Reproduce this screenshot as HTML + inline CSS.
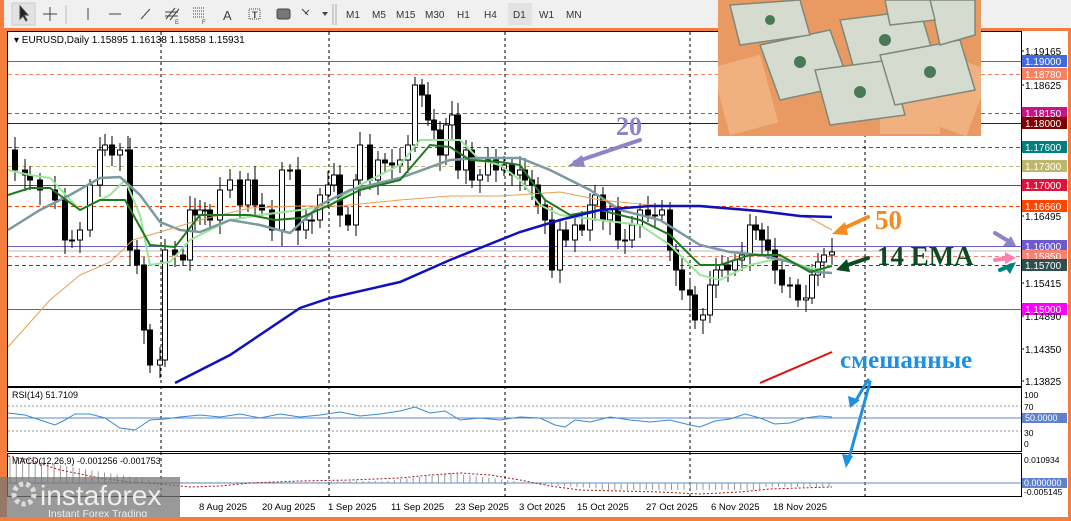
<!DOCTYPE html>
<html><head><meta charset="utf-8"><style>
body{margin:0;width:1071px;height:521px;overflow:hidden;background:#f47c3c;font-family:"Liberation Sans",sans-serif}
svg{position:absolute;left:0;top:0}
</style></head><body>
<svg id="s" width="1071" height="521" xmlns="http://www.w3.org/2000/svg" font-family="Liberation Sans, sans-serif">
<defs><clipPath id="ci"><rect x="718" y="0" width="263" height="136"/></clipPath></defs>
<rect x="4" y="0" width="1067" height="28" fill="#f0f0f0"/>
<rect x="12" y="3" width="23" height="22" fill="#e2e2e2" stroke="#ccc"/>
<rect x="508" y="3" width="24" height="22" fill="#e2e2e2"/>
<g stroke="#444" fill="none" stroke-width="1">
<path d="M20 6 L20 19 L23 16 L26 21 L27 20 L24 15 L28 15 Z" fill="#222"/>
<path d="M50 7v14M43 14h14"/><line x1="66" y1="5" x2="66" y2="24" stroke="#bbb"/>
<path d="M88 8v12M109 14h12M141 19l9-10"/>
<path d="M166 19l9-11M170 20l9-11M165 12h13M165 16h13"/>
<path d="M193 8h12M193 11h12M193 14h12M193 17h12" stroke-dasharray="1 1"/>
<path d="M249 9h11v10h-11z" stroke-dasharray="1 1"/>
<rect x="277" y="9" width="13" height="10" rx="2" fill="#777"/>
<path d="M302 9l6 6M309 10l-4 4" />
<line x1="333" y1="4" x2="333" y2="25" stroke="#aaa"/><line x1="336" y1="4" x2="336" y2="25" stroke="#aaa"/>
</g>
<path d="M322 12h6l-3 4z" fill="#444"/>
<text x="175" y="24" font-size="6" fill="#444">E</text><text x="202" y="24" font-size="6" fill="#444">F</text>
<text x="223" y="20" font-size="13" fill="#444">A</text>
<text x="252" y="18" font-size="9" fill="#444" font-weight="bold">T</text>
<g font-size="10" fill="#333"><text x="346" y="18">M1</text><text x="372" y="18">M5</text><text x="396" y="18">M15</text><text x="425" y="18">M30</text><text x="457" y="18">H1</text><text x="484" y="18">H4</text><text x="513" y="18">D1</text><text x="539" y="18">W1</text><text x="566" y="18">MN</text></g>
<rect x="7" y="31" width="1061" height="486" fill="#fff"/>
<g stroke="#000" fill="none"><rect x="7.5" y="31.5" width="1014" height="355"/><rect x="7.5" y="387.5" width="1014" height="64"/><rect x="7.5" y="453.5" width="1014" height="43"/></g>
<g id="hl"></g>
<g stroke="#000" stroke-dasharray="3 3"><path d="M161 32V497M329 32V497M505 32V497M690 32V497M865 32V497"/></g>
<g clip-path="url(#ci)">
<rect x="718" y="0" width="263" height="136" fill="#e99a62"/>
<g fill="#f0b080"><rect x="720" y="60" width="50" height="70" transform="rotate(-15 745 95)"/><rect x="930" y="60" width="50" height="70" transform="rotate(20 955 95)"/><rect x="880" y="100" width="60" height="34"/></g>
<g fill="#d6dbd0" stroke="#7d8a7a" stroke-width="1.5">
<polygon points="760,45 830,30 850,85 780,100"/><polygon points="840,20 920,10 935,60 855,72"/><polygon points="815,70 890,60 905,115 830,125"/><polygon points="880,55 960,40 975,90 895,105"/><polygon points="730,5 800,0 810,35 740,45"/><polygon points="930,0 975,0 975,35 940,45"/><polygon points="885,0 930,0 935,20 890,25"/></g>
<g fill="#4a7a55"><circle cx="800" cy="62" r="6"/><circle cx="885" cy="40" r="6"/><circle cx="860" cy="92" r="6"/><circle cx="930" cy="72" r="6"/><circle cx="770" cy="20" r="5"/></g>
</g>
<g id="c"></g>
<g fill="none">
<polyline stroke="#98e898" stroke-width="2" points="8,170 30,175 50,178 80,210 110,195 125,180 140,215 150,265 170,262 190,240 230,220 260,215 300,210 330,205 360,185 400,165 420,140 440,140 460,140 480,160 500,165 520,180 540,205 560,215 600,220 640,225 670,245 700,275 720,280 750,265 780,258 800,265 820,270 832,265"/>
<polyline stroke="#7a9aa0" stroke-width="2.5" points="8,230 40,210 70,195 100,178 120,177 140,195 160,222 180,230 200,232 230,220 260,225 290,233 320,205 350,190 400,178 450,160 480,158 520,158 550,170 590,190 620,210 660,220 700,245 730,252 760,255 790,262 815,272 832,273"/>
<polyline stroke="#e8a050" stroke-width="1" points="8,347 50,300 80,275 110,262 133,240 160,232 200,220 250,208 300,206 340,206 400,200 450,196 500,196 560,192 600,200 650,205 700,207 760,212 810,218 832,230"/>
<polyline stroke="#1e7a1e" stroke-width="2" points="8,195 30,188 50,188 80,210 100,200 125,200 150,245 175,247 200,215 250,215 275,220 300,218 330,205 360,190 400,180 430,145 450,147 470,160 500,162 520,165 545,200 570,215 600,210 640,220 670,235 700,265 720,265 750,255 780,255 810,272 832,266"/>
<polyline stroke="#1010c0" stroke-width="2.5" points="175,383 230,355 300,308 330,298 400,282 450,260 500,240 520,232 560,220 600,210 650,206 700,206 760,211 800,216 832,217"/>
<polyline stroke="#e01010" stroke-width="2" points="760,383 832,352"/>
</g>
<g font-family="Liberation Serif, serif" font-weight="bold">
<text x="616" y="135" font-size="26" fill="#8b85c8">20</text>
<text x="875" y="229" font-size="27" fill="#f58a1f">50</text>
<text x="877" y="265" font-size="27" fill="#0d4a22">14 EMA</text>
<text x="840" y="368" font-size="25" fill="#1e90e0">смешанные</text>
</g>
<g stroke-width="4" fill="none" stroke-linecap="round">
<path d="M640 140L575 162" stroke="#8b85c8"/><path d="M868 217L838 231" stroke="#f58a1f"/><path d="M868 258L842 267" stroke="#0d4a22"/>
<path d="M995 233L1010 242" stroke="#8b85c8"/><path d="M995 260L1010 258" stroke="#ff80b0"/><path d="M1000 270L1012 265" stroke="#008080"/>
<path d="M868 380L855 402M870 382L848 462" stroke="#1e90e0" stroke-width="3"/>
</g>
<g>
<polygon points="568,166 582,155 585,167" fill="#8b85c8"/><polygon points="832,234 845,222 848,235" fill="#f58a1f"/><polygon points="836,270 847,259 850,272" fill="#0d4a22"/>
<polygon points="1016,246 1003,246 1011,236" fill="#8b85c8"/><polygon points="1016,258 1005,252 1005,264" fill="#ff80b0"/><polygon points="1016,262 1004,266 1010,274" fill="#008080"/>
<polygon points="850,408 848,396 860,400" fill="#1e90e0"/><polygon points="846,468 842,454 853,456" fill="#1e90e0"/>
</g>
<text x="14" y="43" font-size="10" fill="#000">▾ EURUSD,Daily  1.15895 1.16138 1.15858 1.15931</text>
<g id="ax" font-size="9.5" fill="#000"></g>
<g stroke="#999" stroke-dasharray="2 2"><path d="M8 406H1021M8 431H1021"/></g>
<path d="M8 418H1021" stroke="#5a8ad0"/>
<polyline fill="none" stroke="#3c88d0" points="8,413 25,415 40,420 55,425 65,420 75,414 90,414 105,418 120,428 135,430 150,420 165,419 180,417 200,415 220,417 240,414 260,418 280,414 300,417 320,415 340,412 360,416 380,414 400,411 415,407 430,413 445,411 460,420 480,418 500,420 520,417 540,418 555,425 565,427 575,420 590,422 610,417 630,420 650,422 670,420 690,425 700,427 715,421 730,419 745,414 760,418 775,424 790,423 805,418 820,416 832,417"/>
<text x="12" y="398" font-size="9" fill="#000">RSI(14) 51.7109</text>
<path d="M8 483H1021" stroke="#5a8ad0"/>
<g id="mh" stroke="#999"></g>
<polyline fill="none" stroke="#a01818" stroke-dasharray="2 2" points="8,456 30,460 60,470 100,478 130,482 160,484 190,487 220,486 250,483 300,481 350,480 400,478 430,475 460,473 490,475 520,480 550,486 580,490 620,491 660,492 700,494 740,492 770,489 800,488 832,487"/>
<text x="12" y="464" font-size="9" fill="#000">MACD(12,26,9) -0.001256 -0.001753</text>
<g font-size="9.5" fill="#000">
<text x="199" y="510">8 Aug 2025</text><text x="262" y="510">20 Aug 2025</text><text x="328" y="510">1 Sep 2025</text><text x="391" y="510">11 Sep 2025</text><text x="455" y="510">23 Sep 2025</text><text x="519" y="510">3 Oct 2025</text><text x="577" y="510">15 Oct 2025</text><text x="646" y="510">27 Oct 2025</text><text x="711" y="510">6 Nov 2025</text><text x="773" y="510">18 Nov 2025</text>
<text x="1024" y="398" font-size="8.5">100</text><text x="1024" y="410" font-size="8.5">70</text><text x="1024" y="436" font-size="8.5">30</text><text x="1024" y="447" font-size="8.5">0</text>
<text x="1024" y="463" font-size="8.5">0.010934</text><text x="1024" y="495" font-size="8.5">-0.005145</text>
</g>
<rect x="1022" y="413" width="45" height="10" fill="#6080d0"/><text x="1025" y="421" font-size="9" fill="#fff">50.0000</text>
<rect x="1022" y="478" width="45" height="10" fill="#6080d0"/><text x="1024" y="486" font-size="9" fill="#fff">0.000000</text>
<rect x="0" y="477" width="180" height="44" fill="#777" opacity=".75"/>
<circle cx="24" cy="494" r="10" fill="none" stroke="#ddd" stroke-width="5" stroke-dasharray="4 3"/>
<text x="40" y="505" font-size="28" fill="#eee">instaforex</text>
<text x="48" y="517" font-size="10.5" fill="#eee">Instant Forex Trading</text>
<rect x="0" y="517" width="1071" height="4" fill="#f47c3c"/>
</svg>
<script>
var NS="http://www.w3.org/2000/svg";
function el(p,t,a){var e=document.createElementNS(NS,t);for(var k in a)e.setAttribute(k,a[k]);p.appendChild(e);return e;}
var hl=document.getElementById('hl'),ax=document.getElementById('ax');
var L=[[61,"#4169e1",0,"1.19000"],[74,"#fa8060",1,"1.18780"],[113,"#a040a0",1,"1.18150","#c71585"],[123,"#800000",0,"1.18000"],[147,"#008080",1,"1.17600"],[166,"#bdb76b",1,"1.17300"],[185,"#dc143c",0,"1.17000"],[206,"#ff4500",1,"1.16660"],[246,"#6a5acd",0,"1.16000"],[256,"#fa8072",1,"1.15850"],[265,"#2f4f4f",1,"1.15700"],[309,"#ff00ff",0,"1.15000"]];
el(hl,'line',{x1:8,x2:1021,y1:251,y2:251,stroke:"#bbb"});
L.forEach(function(l){var a={x1:8,x2:1021,y1:l[0]+.5,y2:l[0]+.5,stroke:l[1]};if(l[2])a['stroke-dasharray']="4 3";el(hl,'line',a);
el(ax,'rect',{x:1022,y:l[0]-6,width:45,height:12,fill:l[4]||l[1]});var t=el(ax,'text',{x:1025,y:l[0]+4,fill:"#fff","font-size":"10"});t.textContent=l[3];});
[[51,"1.19165"],[85,"1.18625"],[216,"1.16495"],[283,"1.15415"],[316,"1.14890"],[349,"1.14350"],[381,"1.13825"]].forEach(function(a){var t=el(ax,'text',{x:1025,y:a[0]+4,"font-size":"10"});t.textContent=a[1];el(ax,'line',{x1:1021,x2:1024,y1:a[0],y2:a[0],stroke:"#000"});});
var P=[[8,150],[15,170],[25,175],[30,180],[40,190],[55,200],[65,240],[72,240],[80,230],[90,185],[100,150],[105,145],[112,155],[120,150],[128,150],[130,250],[137,265],[144,330],[150,365],[160,360],[165,250],[175,255],[183,260],[190,210],[195,215],[200,210],[205,210],[210,220],[220,190],[230,180],[240,205],[248,180],[255,205],[262,210],[272,230],[282,170],[290,170],[298,230],[306,220],[312,220],[320,195],[328,185],[334,175],[340,215],[348,225],[356,180],[360,145],[370,180],[378,160],[385,163],[392,165],[400,160],[408,145],[415,85],[422,95],[428,120],[434,130],[440,155],[446,125],[452,115],[458,170],[466,150],[472,180],[480,175],[488,160],[496,170],[504,165],[512,175],[520,170],[525,180],[532,185],[538,205],[545,220],[552,270],[560,230],[566,240],[575,225],[582,230],[590,205],[595,195],[603,220],[610,210],[618,240],[625,240],[632,225],[640,210],[648,215],[655,215],[662,210],[670,250],[676,270],[682,290],[690,295],[695,320],[703,315],[710,285],[716,270],[722,265],[728,270],[735,260],[742,255],[750,225],[756,230],[762,240],[768,250],[775,270],[782,285],[790,285],[798,300],[806,298],[812,275],[818,262],[824,255],[832,252]];
var c=document.getElementById('c'),mh=document.getElementById('mh');
for(var i=1;i<P.length;i++){var x=P[i][0],o=P[i-1][1],cl=P[i][1],hi=Math.min(o,cl)-6-(i*7%9),lo=Math.max(o,cl)+6+(i*5%11);
el(c,'line',{x1:x,x2:x,y1:hi,y2:lo,stroke:"#000"});
el(c,'rect',{x:x-2.5,y:Math.min(o,cl),width:5,height:Math.max(1,Math.abs(o-cl)),fill:cl>o?"#000":"#fff",stroke:"#000"});}
for(var x=10;x<833;x+=6.3){var v=x<160?(483-(28-x/6)):x<330?483-1:x<520?483-(x>380?(10-Math.abs(x-450)/8):2):x<600?483+(x-520)/14:x<760?490:487;el(mh,'line',{x1:x,x2:x,y1:483,y2:v});}
</script>
</body></html>
